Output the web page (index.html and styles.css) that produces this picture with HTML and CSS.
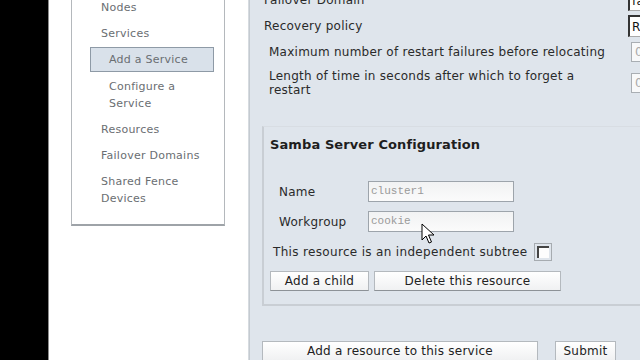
FILE: index.html
```html
<!DOCTYPE html>
<html lang="en">
<head>
  <meta charset="UTF-8" />
  <title>Add a Service</title>
  <link rel="stylesheet" href="styles.css">
</head>
<body>
  <div class="edge"></div>

  <div class="side">
    <ul class="nav">
      <li>Nodes</li>
      <li>Services</li>
      <li class="sub active">Add a Service</li>
      <li class="sub">Configure a<br>Service</li>
      <li>Resources</li>
      <li>Failover Domains</li>
      <li>Shared Fence<br>Devices</li>
    </ul>
  </div>

  <div class="main">
    <div class="opts">
      <div class="label">Failover Domain</div>
      <div><span class="select">fa</span></div>
      <div class="label">Recovery policy</div>
      <div><span class="select">R</span></div>
      <div class="label indent">Maximum number of restart failures before relocating</div>
      <div><span class="small-input">0</span></div>
      <div class="label indent">Length of time in seconds after which to forget a<br>restart</div>
      <div><span class="small-input">0</span></div>
    </div>

    <div class="panel">
      <h2>Samba Server Configuration</h2>
      <div class="fields">
        <label>Name</label>
        <span class="input">cluster1</span>
        <label>Workgroup</label>
        <span class="input">cookie</span>
      </div>
      <div class="subtree">This resource is an independent subtree <span class="check"><span></span></span></div>
      <div class="btns">
        <button class="btn-child">Add a child</button>
        <button class="btn-delete">Delete this resource</button>
      </div>
    </div>

    <div class="actions">
      <button class="btn-add">Add a resource to this service</button>
      <button class="btn-submit">Submit</button>
    </div>

    <svg class="cursor" width="14" height="22" viewBox="0 0 14 22">
      <path d="M1 1 L1 17 L5 13 L8 20 L10.5 19 L7.5 12 L13 12 Z" fill="#fff" stroke="#000" stroke-width="1" stroke-linejoin="round"/>
    </svg>
  </div>
</body>
</html>
```

FILE: styles.css
```css
body {
  margin: 0;
  height: 360px;
  overflow: hidden;
  display: flex;
  font-family: "DejaVu Sans", Verdana, sans-serif;
  font-size: 12px;
  letter-spacing: 0.25px;
  color: #2a2a2a;
}

.edge {
  width: 48px;
  background: #000;
  border-right: 1px solid #8c8c8c;
}

.side {
  width: 200px;
  background: #fff;
  border-right: 1px solid #d6dbe0;
  padding-left: 22px;
  box-sizing: border-box;
}

.nav {
  list-style: none;
  margin: -20px 0 0;
  padding: 14px 0 12px;
  width: 154px;
  box-sizing: border-box;
  border: 1px solid #b4b8bc;
  border-bottom: 2px solid #9ea3a8;
  color: #6a6e72;
  font-size: 11px;
}

.nav li {
  line-height: 17px;
  padding: 4px 0 5px 29px;
}

.nav li.sub {
  padding-left: 37px;
}

.nav li.active {
  margin: 0 0 2px 18px;
  width: 124px;
  box-sizing: border-box;
  padding: 3px 0 3px 18px;
  background: #d9e1ea;
  border: 1px solid #8e9aa6;
}

.main {
  flex: 1;
  position: relative;
  overflow: hidden;
  background: #dfe5ec;
  border-left: 1px solid #c4cad0;
  padding-left: 14px;
}

.opts {
  display: grid;
  grid-template-columns: 364px 60px;
  margin-top: -13px;
}

.opts > div {
  display: flex;
  align-items: center;
  min-height: 26px;
}

.opts .label {
  line-height: 14px;
}

.opts .label.indent {
  padding-left: 5px;
}

.opts > div:nth-child(7),
.opts > div:nth-child(8) {
  min-height: 36px;
}

.select {
  display: block;
  width: 80px;
  height: 22px;
  line-height: 20px;
  box-sizing: border-box;
  padding-left: 2px;
  background: #fff;
  border: 1px solid #aaa;
  border-top: 2px solid #333;
  border-left: 2px solid #333;
  color: #111;
}

.small-input {
  display: block;
  margin-left: 3px;
  width: 40px;
  height: 20px;
  line-height: 18px;
  box-sizing: border-box;
  padding-left: 3px;
  background: #f8f9fa;
  border: 1px solid #a9aeb3;
  color: #aaa;
}

.panel {
  margin-top: 25px;
  margin-left: -2px;
  margin-right: -20px;
  padding: 10px 0 13px 6px;
  border-left: 2px solid #c9ced4;
  border-bottom: 2px solid #c9ced4;
  border-top: 1px solid #d8dde3;
}

.panel h2 {
  margin: 0;
  font-size: 13px;
  line-height: 16px;
  font-weight: bold;
  letter-spacing: 0.1px;
  color: #1e1e1e;
}

.fields {
  display: grid;
  grid-template-columns: 89px 146px;
  row-gap: 9px;
  align-items: center;
  margin: 28px 0 0 9px;
}

.input {
  display: block;
  height: 21px;
  line-height: 19px;
  box-sizing: border-box;
  padding-left: 2px;
  border: 1px solid #9da4ab;
  background: linear-gradient(#f1f2f3, #fbfbfb);
  font-family: "Liberation Mono", monospace;
  font-size: 11px;
  letter-spacing: 0;
  color: #9a9a9a;
}

.subtree {
  display: flex;
  align-items: center;
  gap: 7px;
  margin: 11px 0 0 3px;
  height: 18px;
  letter-spacing: 0.33px;
}

.check {
  display: inline-block;
  width: 18px;
  height: 18px;
  box-sizing: border-box;
  border: 1px solid #a6abb0;
  padding: 2px;
}

.check span {
  display: block;
  width: 100%;
  height: 100%;
  box-sizing: border-box;
  background: #fdfdfd;
  border-top: 2px solid #444;
  border-left: 2px solid #444;
}

.btns {
  display: flex;
  gap: 5px;
  margin-top: 10px;
}

button {
  font-family: "DejaVu Sans", Verdana, sans-serif;
  font-size: 12px;
  letter-spacing: 0.25px;
  color: #222;
  height: 20px;
  padding: 0;
  background: linear-gradient(#ffffff, #f0f1f2);
  border: 1px solid #b4b9be;
  border-bottom-color: #8d9297;
}

.btn-child { width: 99px; }
.btn-delete { width: 187px; }

.actions {
  display: flex;
  gap: 17px;
  margin: 35px 0 0 -2px;
}

.btn-add { width: 276px; }
.btn-submit { width: 61px; }

.cursor {
  position: absolute;
  left: 171px;
  top: 223px;
}
```
